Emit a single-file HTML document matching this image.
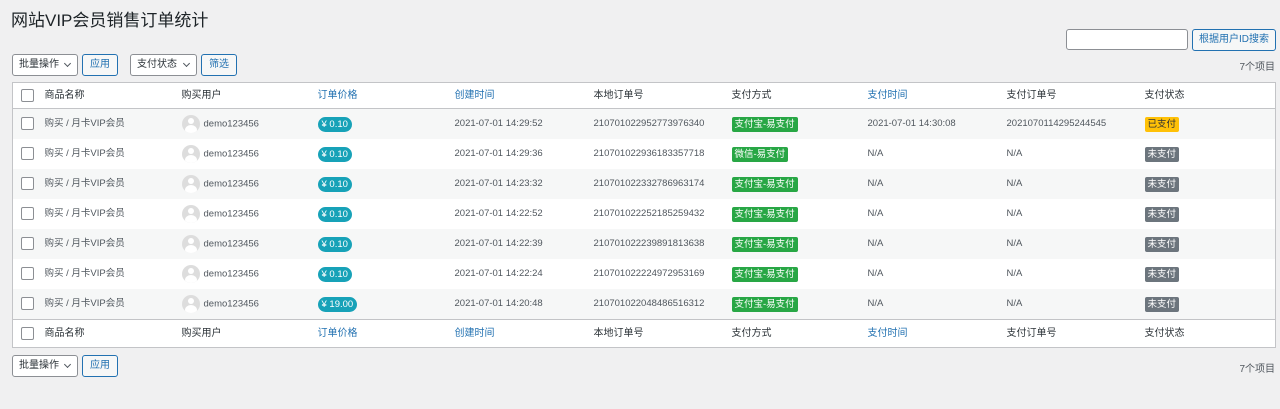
<!DOCTYPE html><html><head><meta charset="utf-8"><style>
body{margin:0;background:#f0f0f1;font-family:"Liberation Sans","Noto Sans CJK SC",sans-serif;font-size:9.5px;color:#50575e;width:1280px;height:409px;overflow:hidden;position:relative}
.a{position:absolute}
h1{position:absolute;left:11px;top:6px;margin:0;font-weight:400;font-size:17px;color:#1d2327}
.sel{position:absolute;height:22px;border:1px solid #8c8f94;border-radius:3px;background:#fff;box-sizing:border-box;line-height:20px;padding-left:6px;font-size:10px;color:#2c3338}
.sel:after{content:"";position:absolute;right:7px;top:6px;width:4px;height:4px;border-right:1.2px solid #50575e;border-bottom:1.2px solid #50575e;transform:rotate(45deg)}
.btn{position:absolute;height:22px;border:1px solid #2271b1;border-radius:3px;background:#f6f7f7;box-sizing:border-box;line-height:20px;text-align:center;color:#2271b1;font-size:10px}
table{position:absolute;left:12px;top:82px;width:1264px;border-collapse:collapse;background:#fff;border:1px solid #c3c4c7}
td{padding:0;height:30px;white-space:nowrap;line-height:12px;vertical-align:middle}
tr.h td{height:25px;font-size:10px;color:#2c3338}
tr.h:first-child td{border-bottom:1px solid #c3c4c7}
tr.f td{border-top:1px solid #c3c4c7;height:27px}
tr.s td{background:#f6f7f7}
.lk{color:#2271b1!important}
.cb{display:inline-block;width:11px;height:11px;border:1px solid #8c8f94;border-radius:2px;background:#fff;vertical-align:middle;margin-left:8px}
.av{display:inline-block;width:18px;height:18px;border-radius:50%;background:#ddd;vertical-align:middle;margin-right:4px;position:relative;overflow:hidden}
.av:before{content:"";position:absolute;left:6px;top:3px;width:6px;height:6px;border-radius:50%;background:#fff}
.av:after{content:"";position:absolute;left:3px;top:10px;width:12px;height:10px;border-radius:50%;background:#fff}
.pr{display:inline-block;background:#17a2b8;color:#fff;border-radius:8px;padding:0 4px;height:15px;line-height:15px;font-size:9.5px;vertical-align:middle}
.g,.y,.k{display:inline-block;color:#fff;border-radius:2px;padding:0 3px;height:15px;line-height:15px;font-size:9.5px;vertical-align:middle}
.g{background:#28a745}.y{background:#ffc107;color:#333}.k{background:#6c757d}
</style></head><body>
<h1>网站VIP会员销售订单统计</h1>
<div class="a" style="left:1066px;top:29px;width:122px;height:21px;border:1px solid #8c8f94;border-radius:3px;background:#fff;box-sizing:border-box"></div>
<div class="btn" style="left:1192px;top:29px;width:84px;height:22px">根据用户ID搜索</div>
<div class="sel" style="left:12px;top:54px;width:66px">批量操作</div>
<div class="btn" style="left:82px;top:54px;width:36px">应用</div>
<div class="sel" style="left:130px;top:54px;width:67px">支付状态</div>
<div class="btn" style="left:201px;top:54px;width:36px">筛选</div>
<div class="a" style="right:5px;top:58px;font-size:10px">7个项目</div>
<table>
<colgroup><col style="width:32px"><col style="width:137px"><col style="width:136px"><col style="width:137px"><col style="width:139px"><col style="width:138px"><col style="width:136px"><col style="width:139px"><col style="width:138px"><col></colgroup>
<tr class="h"><td><span class="cb"></span></td><td>商品名称</td><td>购买用户</td><td class="lk">订单价格</td><td class="lk">创建时间</td><td>本地订单号</td><td>支付方式</td><td class="lk">支付时间</td><td>支付订单号</td><td>支付状态</td></tr>
<tr class="s"><td><span class="cb"></span></td><td>购买 / 月卡VIP会员</td><td><span class="av"></span>demo123456</td><td><span class="pr">¥ 0.10</span></td><td>2021-07-01 14:29:52</td><td>210701022952773976340</td><td><span class="g">支付宝-易支付</span></td><td>2021-07-01 14:30:08</td><td>2021070114295244545</td><td><span class="y">已支付</span></td></tr>
<tr><td><span class="cb"></span></td><td>购买 / 月卡VIP会员</td><td><span class="av"></span>demo123456</td><td><span class="pr">¥ 0.10</span></td><td>2021-07-01 14:29:36</td><td>210701022936183357718</td><td><span class="g">微信-易支付</span></td><td>N/A</td><td>N/A</td><td><span class="k">未支付</span></td></tr>
<tr class="s"><td><span class="cb"></span></td><td>购买 / 月卡VIP会员</td><td><span class="av"></span>demo123456</td><td><span class="pr">¥ 0.10</span></td><td>2021-07-01 14:23:32</td><td>210701022332786963174</td><td><span class="g">支付宝-易支付</span></td><td>N/A</td><td>N/A</td><td><span class="k">未支付</span></td></tr>
<tr><td><span class="cb"></span></td><td>购买 / 月卡VIP会员</td><td><span class="av"></span>demo123456</td><td><span class="pr">¥ 0.10</span></td><td>2021-07-01 14:22:52</td><td>210701022252185259432</td><td><span class="g">支付宝-易支付</span></td><td>N/A</td><td>N/A</td><td><span class="k">未支付</span></td></tr>
<tr class="s"><td><span class="cb"></span></td><td>购买 / 月卡VIP会员</td><td><span class="av"></span>demo123456</td><td><span class="pr">¥ 0.10</span></td><td>2021-07-01 14:22:39</td><td>210701022239891813638</td><td><span class="g">支付宝-易支付</span></td><td>N/A</td><td>N/A</td><td><span class="k">未支付</span></td></tr>
<tr><td><span class="cb"></span></td><td>购买 / 月卡VIP会员</td><td><span class="av"></span>demo123456</td><td><span class="pr">¥ 0.10</span></td><td>2021-07-01 14:22:24</td><td>210701022224972953169</td><td><span class="g">支付宝-易支付</span></td><td>N/A</td><td>N/A</td><td><span class="k">未支付</span></td></tr>
<tr class="s"><td><span class="cb"></span></td><td>购买 / 月卡VIP会员</td><td><span class="av"></span>demo123456</td><td><span class="pr">¥ 19.00</span></td><td>2021-07-01 14:20:48</td><td>210701022048486516312</td><td><span class="g">支付宝-易支付</span></td><td>N/A</td><td>N/A</td><td><span class="k">未支付</span></td></tr>
<tr class="h f"><td><span class="cb"></span></td><td>商品名称</td><td>购买用户</td><td class="lk">订单价格</td><td class="lk">创建时间</td><td>本地订单号</td><td>支付方式</td><td class="lk">支付时间</td><td>支付订单号</td><td>支付状态</td></tr>
</table>
<div class="sel" style="left:12px;top:355px;width:66px">批量操作</div>
<div class="btn" style="left:82px;top:355px;width:36px">应用</div>
<div class="a" style="right:5px;top:360px;font-size:10px">7个项目</div>
</body></html>
